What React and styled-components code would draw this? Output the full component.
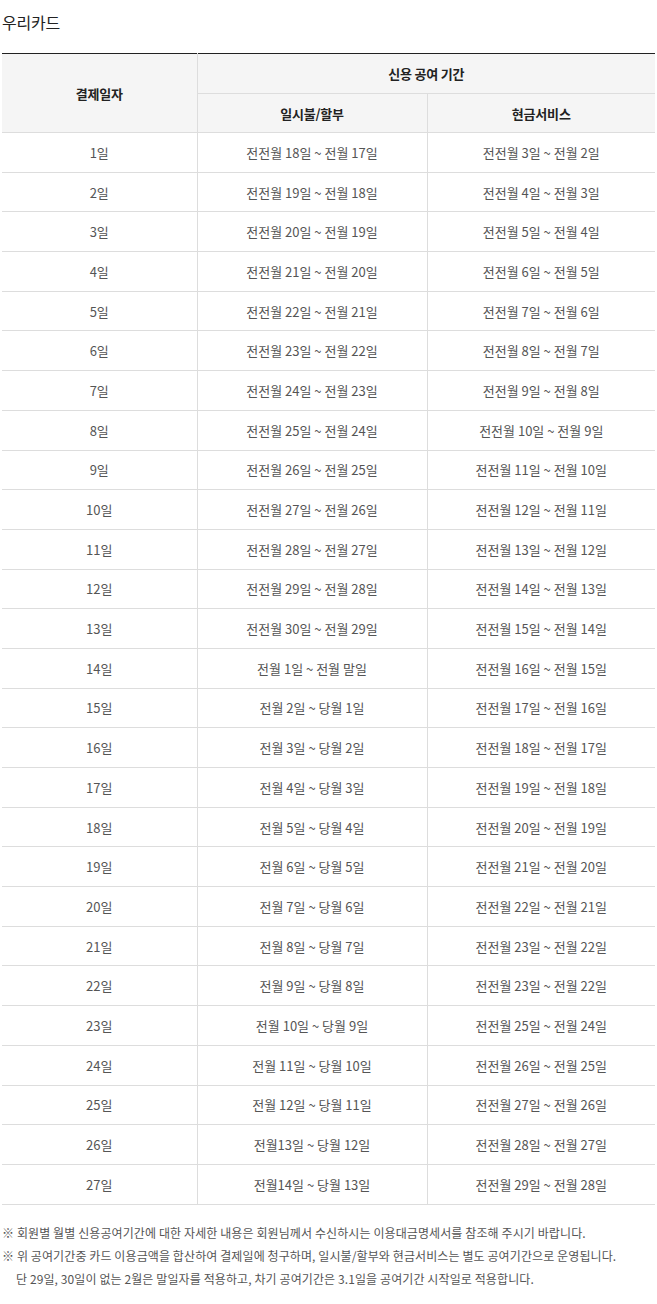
import React from "react";
import styled, { createGlobalStyle } from "styled-components";

const GlobalStyle = createGlobalStyle`
  body {
    margin: 0;
    background: #fff;
    font-family: "Noto Sans CJK KR", "Noto Sans", sans-serif;
  }
`;

const Page = styled.div`
  padding: 10px 2px 0 2px;
  width: 653px;
`;

const Title = styled.h3`
  margin: 0;
  font-size: 16px;
  font-weight: 400;
  color: #222;
  line-height: 24px;
  letter-spacing: -0.2px;
`;

const Table = styled.table`
  margin-top: 19px;
  width: 653px;
  border-collapse: collapse;
  table-layout: fixed;
  border-top: 1px solid #222;
`;

const Th = styled.th`
  background: #f5f5f5;
  color: #222;
  font-size: 13px;
  font-weight: 700;
  text-align: center;
  height: ${(p) => p.$h || 38}px;
  padding: 0;
  border-bottom: 1px solid #ddd;
  border-left: ${(p) => (p.$first ? "none" : "1px solid #ddd")};
  letter-spacing: -0.2px;
`;

const Td = styled.td`
  color: #555;
  font-size: 13px;
  text-align: center;
  height: 38.7px;
  padding: 0;
  border-bottom: 1px solid #ddd;
  border-left: ${(p) => (p.$first ? "none" : "1px solid #ddd")};
  letter-spacing: 0;
`;

const Notes = styled.div`
  margin-top: 16px;
  font-size: 12px;
  color: #555;
  line-height: 23px;
  letter-spacing: 0.1px;
`;

const Note = styled.p`
  margin: 0;
  padding-left: ${(p) => (p.$indent ? "14px" : "0")};
`;

const rows = [
  ["1일", "전전월 18일 ~ 전월 17일", "전전월 3일 ~ 전월 2일"],
  ["2일", "전전월 19일 ~ 전월 18일", "전전월 4일 ~ 전월 3일"],
  ["3일", "전전월 20일 ~ 전월 19일", "전전월 5일 ~ 전월 4일"],
  ["4일", "전전월 21일 ~ 전월 20일", "전전월 6일 ~ 전월 5일"],
  ["5일", "전전월 22일 ~ 전월 21일", "전전월 7일 ~ 전월 6일"],
  ["6일", "전전월 23일 ~ 전월 22일", "전전월 8일 ~ 전월 7일"],
  ["7일", "전전월 24일 ~ 전월 23일", "전전월 9일 ~ 전월 8일"],
  ["8일", "전전월 25일 ~ 전월 24일", "전전월 10일 ~ 전월 9일"],
  ["9일", "전전월 26일 ~ 전월 25일", "전전월 11일 ~ 전월 10일"],
  ["10일", "전전월 27일 ~ 전월 26일", "전전월 12일 ~ 전월 11일"],
  ["11일", "전전월 28일 ~ 전월 27일", "전전월 13일 ~ 전월 12일"],
  ["12일", "전전월 29일 ~ 전월 28일", "전전월 14일 ~ 전월 13일"],
  ["13일", "전전월 30일 ~ 전월 29일", "전전월 15일 ~ 전월 14일"],
  ["14일", "전월 1일 ~ 전월 말일", "전전월 16일 ~ 전월 15일"],
  ["15일", "전월 2일 ~ 당월 1일", "전전월 17일 ~ 전월 16일"],
  ["16일", "전월 3일 ~ 당월 2일", "전전월 18일 ~ 전월 17일"],
  ["17일", "전월 4일 ~ 당월 3일", "전전월 19일 ~ 전월 18일"],
  ["18일", "전월 5일 ~ 당월 4일", "전전월 20일 ~ 전월 19일"],
  ["19일", "전월 6일 ~ 당월 5일", "전전월 21일 ~ 전월 20일"],
  ["20일", "전월 7일 ~ 당월 6일", "전전월 22일 ~ 전월 21일"],
  ["21일", "전월 8일 ~ 당월 7일", "전전월 23일 ~ 전월 22일"],
  ["22일", "전월 9일 ~ 당월 8일", "전전월 23일 ~ 전월 22일"],
  ["23일", "전월 10일 ~ 당월 9일", "전전월 25일 ~ 전월 24일"],
  ["24일", "전월 11일 ~ 당월 10일", "전전월 26일 ~ 전월 25일"],
  ["25일", "전월 12일 ~ 당월 11일", "전전월 27일 ~ 전월 26일"],
  ["26일", "전월13일 ~ 당월 12일", "전전월 28일 ~ 전월 27일"],
  ["27일", "전월14일 ~ 당월 13일", "전전월 29일 ~ 전월 28일"],
];

export default function App() {
  return (
    <Page>
      <GlobalStyle />
      <Title>우리카드</Title>
      <Table>
        <colgroup>
          <col style={{ width: 195 }} />
          <col style={{ width: 230 }} />
          <col style={{ width: 228 }} />
        </colgroup>
        <thead>
          <tr>
            <Th $first rowSpan={2}>결제일자</Th>
            <Th colSpan={2} $h={39}>신용 공여 기간</Th>
          </tr>
          <tr>
            <Th $h={38}>일시불/할부</Th>
            <Th $h={38}>현금서비스</Th>
          </tr>
        </thead>
        <tbody>
          {rows.map((r) => (
            <tr key={r[0]}>
              <Td $first>{r[0]}</Td>
              <Td>{r[1]}</Td>
              <Td>{r[2]}</Td>
            </tr>
          ))}
        </tbody>
      </Table>
      <Notes>
        <Note>※ 회원별 월별 신용공여기간에 대한 자세한 내용은 회원님께서 수신하시는 이용대금명세서를 참조해 주시기 바랍니다.</Note>
        <Note>※ 위 공여기간중 카드 이용금액을 합산하여 결제일에 청구하며, 일시불/할부와 현금서비스는 별도 공여기간으로 운영됩니다.</Note>
        <Note $indent>단 29일, 30일이 없는 2월은 말일자를 적용하고, 차기 공여기간은 3.1일을 공여기간 시작일로 적용합니다.</Note>
      </Notes>
    </Page>
  );
}
